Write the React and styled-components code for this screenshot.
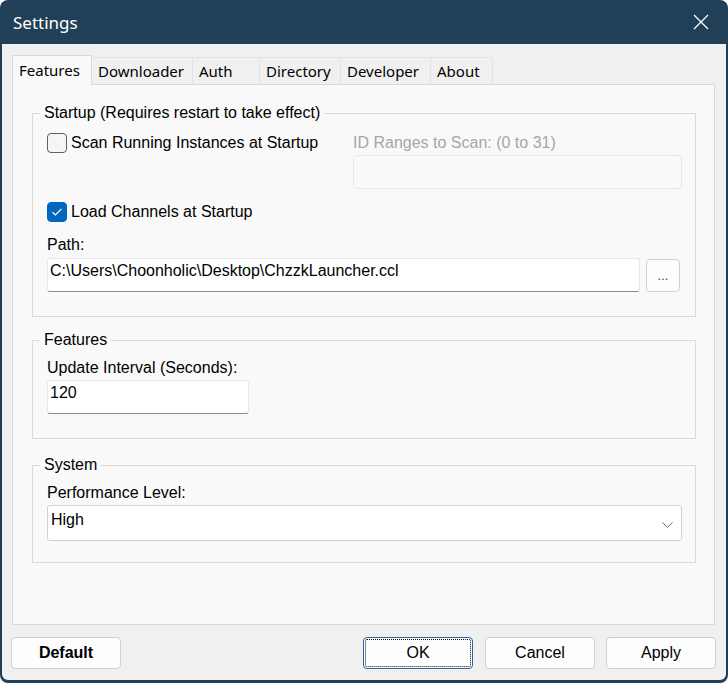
import React from "react";
import styled, { createGlobalStyle } from "styled-components";

const GlobalStyle = createGlobalStyle`
  html, body {
    margin: 0;
    padding: 0;
    background: #ffffff;
  }
  body {
    width: 728px;
    height: 683px;
    overflow: hidden;
  }
  * {
    box-sizing: border-box;
  }
`;

const Window = styled.div`
  width: 728px;
  height: 683px;
  display: flex;
  flex-direction: column;
  background: #213f56;
  border-radius: 8px;
  padding: 0 2px 3px 2px;
  overflow: hidden;
`;

const TitleBar = styled.div`
  height: 44px;
  flex-shrink: 0;
  display: flex;
  align-items: center;
  justify-content: space-between;
  padding: 0 17px 0 11px;
  color: #ffffff;
  font-family: "Noto Sans", sans-serif;
  font-size: 17px;
`;

const CloseIcon = styled.svg`
  width: 16px;
  height: 16px;
  display: block;
`;

const Client = styled.div`
  flex: 1;
  display: flex;
  flex-direction: column;
  background: #f0f0f0;
  padding: 11px 11px 11px 10px;
  border-radius: 0 0 6px 6px;
  font-family: "Liberation Sans", Arial, sans-serif;
  font-size: 16px;
  color: #000000;
`;

const TabStrip = styled.div`
  height: 30px;
  display: flex;
  align-items: flex-start;
  position: relative;
  z-index: 1;
  font-family: "Noto Sans", sans-serif;
  font-size: 15px;
`;

const Tab = styled.div`
  width: ${({ $width }) => $width}px;
  height: ${({ $active }) => ($active ? 30 : 27)}px;
  margin-top: ${({ $active }) => ($active ? 0 : 2)}px;
  margin-left: ${({ $first }) => ($first ? 0 : -1)}px;
  padding: ${({ $active }) => ($active ? 4 : 3)}px 0 0 6px;
  line-height: 20px;
  white-space: nowrap;
  background: ${({ $active }) => ($active ? "#f9f9f9" : "#f0f0f0")};
  border: 1px solid ${({ $active }) => ($active ? "#d9d9d9" : "#e2e2e2")};
  border-bottom: none;
  position: relative;
  z-index: ${({ $active }) => ($active ? 2 : 1)};
`;

const TabPanel = styled.div`
  flex: 1;
  margin-top: -1px;
  background: #f9f9f9;
  border: 1px solid #d9d9d9;
  padding: 18px 18px 0 19px;
  display: flex;
  flex-direction: column;
`;

const Group = styled.fieldset`
  margin: ${({ $top }) => $top}px 0 0 0;
  padding: ${({ $padTop }) => $padTop}px 13px ${({ $padBottom }) => $padBottom}px 14px;
  border: 1px solid #dcdcdc;
  min-width: 0;
`;

const Legend = styled.legend`
  padding: 0 4px;
  margin-left: -7px;
  line-height: 20px;
  font-size: 16px;
`;

const ScanRow = styled.div`
  display: flex;
  align-items: flex-start;
`;

const ScanLeft = styled.div`
  width: 306px;
  flex-shrink: 0;
`;

const ScanRight = styled.div`
  flex: 1;
  display: flex;
  flex-direction: column;
  gap: 2px;
`;

const CheckRow = styled.label`
  display: flex;
  align-items: center;
  height: 20px;
  line-height: 20px;
  margin-top: ${({ $top }) => $top || 0}px;
`;

const Box = styled.span`
  width: 20px;
  height: 20px;
  margin-right: 4px;
  border-radius: 4px;
  display: flex;
  align-items: center;
  justify-content: center;
  background: ${({ $checked }) => ($checked ? "#0067c0" : "#f6f6f6")};
  border: 1px solid ${({ $checked }) => ($checked ? "#0067c0" : "#5f5f5f")};
`;

const FieldLabel = styled.div`
  line-height: 20px;
  margin-top: ${({ $top }) => $top || 0}px;
  color: ${({ $disabled }) => ($disabled ? "#a6a6a6" : "#000000")};
`;

const TextBox = styled.div`
  height: ${({ $height }) => $height || 34}px;
  width: ${({ $width }) => ($width ? `${$width}px` : "auto")};
  flex: ${({ $grow }) => ($grow ? 1 : "none")};
  margin-top: ${({ $top }) => $top || 0}px;
  padding: 2px 3px 0 2px;
  line-height: 20px;
  white-space: nowrap;
  overflow: hidden;
  background: ${({ $disabled }) => ($disabled ? "#fafafa" : "#ffffff")};
  border: 1px solid ${({ $disabled }) => ($disabled ? "#e8e8e8" : "#e6e6e6")};
  border-bottom-color: ${({ $disabled }) => ($disabled ? "#e8e8e8" : "#8c8c8c")};
  border-radius: 3px;
`;

const PathRow = styled.div`
  display: flex;
  align-items: flex-start;
  gap: 6px;
  margin-top: 3px;
`;

const BrowseButton = styled.button`
  width: 34px;
  height: 33px;
  margin-top: 1px;
  margin-right: 2px;
  padding: 0;
  background: #fdfdfd;
  border: 1px solid #d0d0d0;
  border-radius: 4px;
  font-family: "Liberation Sans", Arial, sans-serif;
  font-size: 13px;
  color: #3a3a3a;
`;

const Select = styled.div`
  height: 36px;
  margin-top: 2px;
  padding: 4px 8px 0 3px;
  display: flex;
  align-items: flex-start;
  justify-content: space-between;
  line-height: 20px;
  background: #ffffff;
  border: 1px solid #d0d0d0;
  border-radius: 3px;
`;

const Chevron = styled.svg`
  width: 11px;
  height: 6px;
  margin-top: 12px;
  display: block;
`;

const ButtonRow = styled.div`
  display: flex;
  align-items: center;
  margin: 12px -1px 0 -1px;
`;

const Spacer = styled.div`
  flex: 1;
`;

const Button = styled.button`
  width: 110px;
  height: 32px;
  padding: 0;
  margin-left: ${({ $gap }) => $gap || 0}px;
  position: relative;
  background: #fdfdfd;
  border: 1px solid ${({ $focused }) => ($focused ? "#2a64a6" : "#d0d0d0")};
  border-radius: 4px;
  font-family: "Liberation Sans", Arial, sans-serif;
  font-size: 16px;
  font-weight: ${({ $bold }) => ($bold ? 700 : 400)};
  color: #000000;

  &::after {
    content: "";
    display: ${({ $focused }) => ($focused ? "block" : "none")};
    position: absolute;
    inset: 1px;
    border: 1px dotted #111111;
    border-radius: 2px;
  }
`;

const tabs = [
  { name: "Features", width: 80 },
  { name: "Downloader", width: 102 },
  { name: "Auth", width: 68 },
  { name: "Directory", width: 82 },
  { name: "Developer", width: 91 },
  { name: "About", width: 63 },
];

function Checkbox({ checked, label, top }) {
  return (
    <CheckRow $top={top}>
      <Box $checked={checked}>
        {checked && (
          <svg width="12" height="10" viewBox="0 0 12 10">
            <path
              d="M1.5 5.2 L4.4 8 L10.5 1.8"
              fill="none"
              stroke="#ffffff"
              strokeWidth="1.2"
            />
          </svg>
        )}
      </Box>
      {label}
    </CheckRow>
  );
}

export default function App() {
  return (
    <>
      <GlobalStyle />
      <Window>
        <TitleBar>
          <span>Settings</span>
          <CloseIcon viewBox="0 0 16 16">
            <path
              d="M1 1 L15 15 M15 1 L1 15"
              stroke="#ffffff"
              strokeWidth="1.3"
              fill="none"
            />
          </CloseIcon>
        </TitleBar>

        <Client>
          <TabStrip>
            {tabs.map((tab, i) => (
              <Tab
                key={tab.name}
                $width={tab.width}
                $active={i === 0}
                $first={i === 0}
              >
                {tab.name}
              </Tab>
            ))}
          </TabStrip>

          <TabPanel>
            <Group $top={0} $padTop={10} $padBottom={24}>
              <Legend>Startup (Requires restart to take effect)</Legend>
              <ScanRow>
                <ScanLeft>
                  <Checkbox label="Scan Running Instances at Startup" />
                </ScanLeft>
                <ScanRight>
                  <FieldLabel $disabled>ID Ranges to Scan: (0 to 31)</FieldLabel>
                  <TextBox $disabled />
                </ScanRight>
              </ScanRow>
              <Checkbox checked label="Load Channels at Startup" top={13} />
              <FieldLabel $top={13}>Path:</FieldLabel>
              <PathRow>
                <TextBox $grow>
                  C:\Users\Choonholic\Desktop\ChzzkLauncher.ccl
                </TextBox>
                <BrowseButton>...</BrowseButton>
              </PathRow>
            </Group>

            <Group $top={13} $padTop={8} $padBottom={24}>
              <Legend>Features</Legend>
              <FieldLabel>Update Interval (Seconds):</FieldLabel>
              <TextBox $width={202} $top={2}>
                120
              </TextBox>
            </Group>

            <Group $top={16} $padTop={8} $padBottom={21}>
              <Legend>System</Legend>
              <FieldLabel>Performance Level:</FieldLabel>
              <Select>
                <span>High</span>
                <Chevron viewBox="0 0 11 6">
                  <path
                    d="M0.5 0.5 L5.5 5.3 L10.5 0.5"
                    fill="none"
                    stroke="#6a6a6a"
                    strokeWidth="1"
                  />
                </Chevron>
              </Select>
            </Group>
          </TabPanel>

          <ButtonRow>
            <Button $bold>Default</Button>
            <Spacer />
            <Button $focused>OK</Button>
            <Button $gap={12}>Cancel</Button>
            <Button $gap={11}>Apply</Button>
          </ButtonRow>
        </Client>
      </Window>
    </>
  );
}
